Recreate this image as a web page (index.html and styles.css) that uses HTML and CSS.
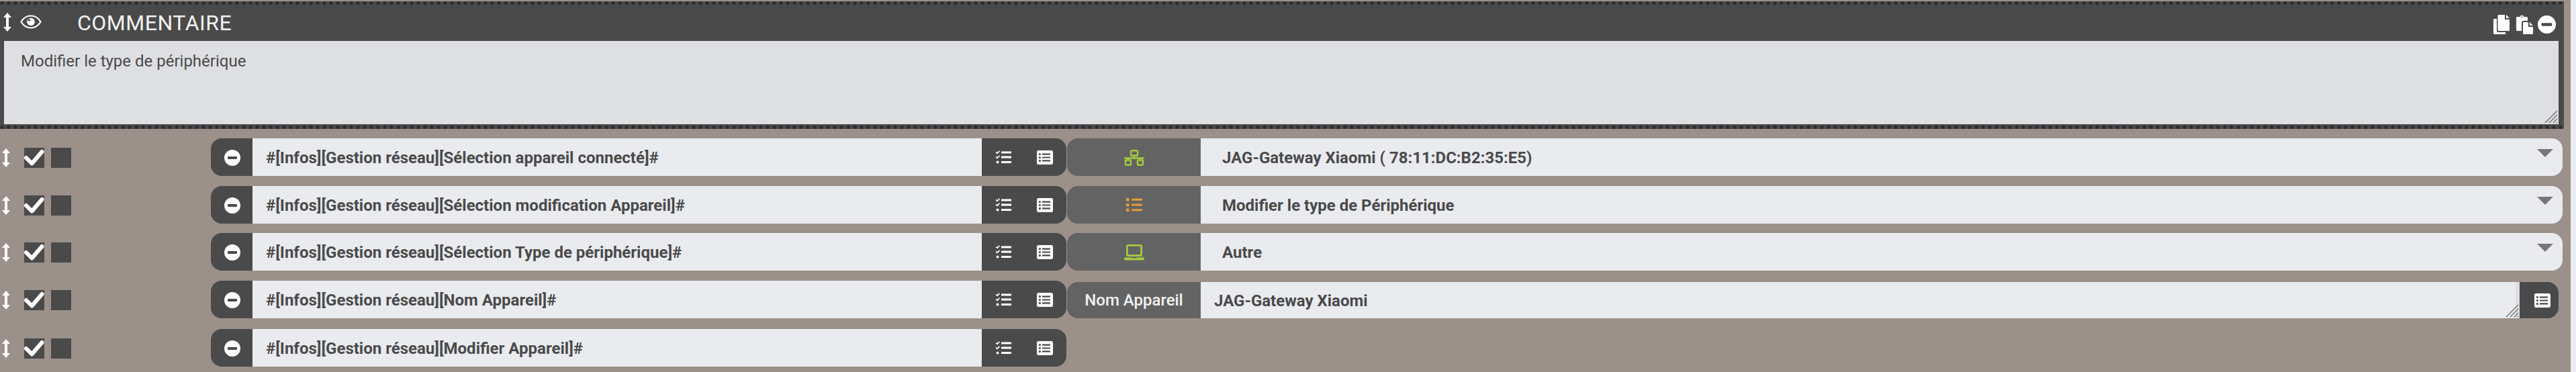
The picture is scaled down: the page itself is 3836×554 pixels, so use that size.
FILE: index.html
```html
<!DOCTYPE html>
<html lang="fr">
<head>
  <meta charset="UTF-8" />
  <title>Scénario</title>
  <link rel="stylesheet" href="styles.css">
</head>
<body>
  <svg class="defs" width="0" height="0">
    <symbol id="i-move" viewBox="0 0 12 28"><path d="M6 0l6 7H8v14h4l-6 7-6-7h4V7H0z" fill="#fff"/></symbol>
    <symbol id="i-eye" viewBox="0 0 32 21"><path d="M1.5 10.5C5 4.500 10 1.500 16 1.500s11 3 14.500 9C27 16.500 22 19.500 16 19.500s-11-3-14.500-9z" fill="none" stroke="#fff" stroke-width="2.200"/><circle cx="16" cy="10.500" r="5.800" fill="#fff"/><circle cx="13.500" cy="8" r="1.800" fill="#4a4a4a"/></symbol>
    <symbol id="i-minus" viewBox="0 0 24 24"><path fill-rule="evenodd" d="M12 0a12 12 0 1 1 0 24a12 12 0 0 1 0-24zM6 10a1 1 0 0 0-1 1v2a1 1 0 0 0 1 1h12a1 1 0 0 0 1-1v-2a1 1 0 0 0-1-1z" fill="#fff"/></symbol>
    <symbol id="i-tasks" viewBox="0 0 24 20"><path d="M.5 3l1.200-1.200 1.300 1.300L5.800.2 7 1.400 3 5.400zM.5 10l1.200-1.200 1.300 1.300 2.800-2.900L7 8.400l-4 4zM9 1.500h15v3H9zM9 8.500h15v3H9zM9 16h15v3H9z" fill="#fff"/><circle cx="3.500" cy="17.500" r="2" fill="#fff"/></symbol>
    <symbol id="i-list" viewBox="0 0 24 21"><path fill-rule="evenodd" d="M2.500 0h19A2.500 2.500 0 0 1 24 2.500v16a2.500 2.500 0 0 1-2.500 2.500h-19A2.500 2.500 0 0 1 0 18.500v-16A2.500 2.500 0 0 1 2.500 0zM8 4.500v2.200h12V4.500zM8 9.400v2.200h12V9.400zM8 14.300v2.200h12v-2.200zM6 5.600a1.600 1.600 0 1 0-3.200 0a1.600 1.600 0 0 0 3.200 0zM6 10.500a1.600 1.600 0 1 0-3.200 0a1.600 1.600 0 0 0 3.200 0zM6 15.400a1.600 1.600 0 1 0-3.200 0a1.600 1.600 0 0 0 3.200 0z" fill="#fff"/></symbol>
    <symbol id="i-copy" viewBox="0 0 25 29"><path d="M8 0h9v7h7v15.500a1.500 1.500 0 0 1-1.500 1.500H8a1.500 1.500 0 0 1-1.500-1.500v-21A1.500 1.500 0 0 1 8 0zM19 0l5 5h-5zM0 7.500A1.500 1.500 0 0 1 1.500 6H5v18a2 2 0 0 0 2 2h11v1.500a1.500 1.500 0 0 1-1.500 1.500h-15A1.500 1.500 0 0 1 0 27.500z" fill="#fff"/></symbol>
    <symbol id="i-paste" viewBox="0 0 25 28"><path fill-rule="evenodd" d="M1.500 2H6a2.500 2.500 0 0 1 5 0h4.500A1.500 1.500 0 0 1 17 3.500V8h-6a3 3 0 0 0-3 3v12H1.500A1.500 1.500 0 0 1 0 21.500v-18A1.500 1.500 0 0 1 1.500 2zM8.500 1.500a1 1 0 1 0 0 2a1 1 0 0 0 0-2z" fill="#fff"/><path d="M11 10h7v7h7v9.500a1.500 1.500 0 0 1-1.500 1.500h-12A1.500 1.500 0 0 1 10 26.500v-15.500a1 1 0 0 1 1-1zM20 10l5 5h-5z" fill="#fff"/></symbol>
    <symbol id="i-check" viewBox="0 0 30 26"><path d="M3 13l8.500 8.500L26.500 4" fill="none" stroke="#fff" stroke-width="6" stroke-linecap="round" stroke-linejoin="round"/></symbol>
    <symbol id="i-network" viewBox="0 0 30 24"><g fill="none" stroke="#a4cb3f" stroke-width="2.400"><rect x="10" y="1.200" width="10" height="7.500" rx="1"/><rect x="2" y="15.500" width="8" height="7.300" rx="1"/><rect x="20" y="15.500" width="8" height="7.300" rx="1"/><path d="M15 9v3.500M0 12.500h30M6 12.500v3M24 12.500v3"/></g></symbol>
    <symbol id="i-bullets" viewBox="0 0 24 20"><g fill="#e39f38"><rect x="0" y="0" width="4.500" height="4.500" rx="1"/><rect x="0" y="8" width="4.500" height="4.500" rx="1"/><rect x="0" y="15.500" width="4.500" height="4.500" rx="1"/><rect x="8" y=".7" width="16" height="3" rx=".8"/><rect x="8" y="8.500" width="16" height="3" rx=".8"/><rect x="8" y="16.300" width="16" height="3" rx=".8"/></g></symbol>
    <symbol id="i-laptop" viewBox="0 0 30 24"><rect x="4.400" y="1.400" width="21.200" height="15.200" rx="1.500" fill="none" stroke="#a4cb3f" stroke-width="2.800"/><path d="M0 19.500h11.500l1 1h5l1-1H30v2a2 2 0 0 1-2 2H2a2 2 0 0 1-2-2z" fill="#a4cb3f"/></symbol>
    <symbol id="i-grip" viewBox="0 0 20 20"><path d="M1 19L19 1M7 19L19 7M13 19l6-6M18 19l1-1" fill="none" stroke="#6f6f6f" stroke-width="1.400"/></symbol>
  </svg>

  <main class="page">
    <section class="comment">
      <header class="comment-head">
        <svg class="ic-move"><use href="#i-move"/></svg>
        <svg class="ic-eye"><use href="#i-eye"/></svg>
        <span class="comment-title">COMMENTAIRE</span>
        <span class="comment-tools">
          <svg class="ic-copy"><use href="#i-copy"/></svg>
          <svg class="ic-paste"><use href="#i-paste"/></svg>
          <svg class="ic-minus-lg"><use href="#i-minus"/></svg>
        </span>
      </header>
      <div class="comment-text">
        Modifier le type de périphérique
        <svg class="grip"><use href="#i-grip"/></svg>
      </div>
    </section>

    <div class="rows">
      <div class="row">
        <div class="row-tools">
          <svg class="ic-drag"><use href="#i-move"/></svg>
          <span class="box"><svg class="ic-check"><use href="#i-check"/></svg></span>
          <span class="box"></span>
        </div>
        <div class="cmd">
          <span class="cmd-del"><svg class="ic-minus"><use href="#i-minus"/></svg></span>
          <span class="cmd-name">#[Infos][Gestion réseau][Sélection appareil connecté]#</span>
          <span class="cmd-btns"><svg class="ic-tasks"><use href="#i-tasks"/></svg><svg class="ic-list"><use href="#i-list"/></svg></span>
        </div>
        <div class="param">
          <span class="param-label"><svg class="ic-network"><use href="#i-network"/></svg></span>
          <span class="param-select">JAG-Gateway Xiaomi ( 78:11:DC:B2:35:E5)<i class="arrow"></i></span>
        </div>
      </div>

      <div class="row">
        <div class="row-tools">
          <svg class="ic-drag"><use href="#i-move"/></svg>
          <span class="box"><svg class="ic-check"><use href="#i-check"/></svg></span>
          <span class="box"></span>
        </div>
        <div class="cmd">
          <span class="cmd-del"><svg class="ic-minus"><use href="#i-minus"/></svg></span>
          <span class="cmd-name">#[Infos][Gestion réseau][Sélection modification Appareil]#</span>
          <span class="cmd-btns"><svg class="ic-tasks"><use href="#i-tasks"/></svg><svg class="ic-list"><use href="#i-list"/></svg></span>
        </div>
        <div class="param">
          <span class="param-label"><svg class="ic-bullets"><use href="#i-bullets"/></svg></span>
          <span class="param-select">Modifier le type de Périphérique<i class="arrow"></i></span>
        </div>
      </div>

      <div class="row">
        <div class="row-tools">
          <svg class="ic-drag"><use href="#i-move"/></svg>
          <span class="box"><svg class="ic-check"><use href="#i-check"/></svg></span>
          <span class="box"></span>
        </div>
        <div class="cmd">
          <span class="cmd-del"><svg class="ic-minus"><use href="#i-minus"/></svg></span>
          <span class="cmd-name">#[Infos][Gestion réseau][Sélection Type de périphérique]#</span>
          <span class="cmd-btns"><svg class="ic-tasks"><use href="#i-tasks"/></svg><svg class="ic-list"><use href="#i-list"/></svg></span>
        </div>
        <div class="param">
          <span class="param-label"><svg class="ic-laptop"><use href="#i-laptop"/></svg></span>
          <span class="param-select">Autre<i class="arrow"></i></span>
        </div>
      </div>

      <div class="row">
        <div class="row-tools">
          <svg class="ic-drag"><use href="#i-move"/></svg>
          <span class="box"><svg class="ic-check"><use href="#i-check"/></svg></span>
          <span class="box"></span>
        </div>
        <div class="cmd">
          <span class="cmd-del"><svg class="ic-minus"><use href="#i-minus"/></svg></span>
          <span class="cmd-name">#[Infos][Gestion réseau][Nom Appareil]#</span>
          <span class="cmd-btns"><svg class="ic-tasks"><use href="#i-tasks"/></svg><svg class="ic-list"><use href="#i-list"/></svg></span>
        </div>
        <div class="param param-input">
          <span class="param-label">Nom Appareil</span>
          <span class="param-text">JAG-Gateway Xiaomi<svg class="grip"><use href="#i-grip"/></svg></span>
          <span class="param-btn"><svg class="ic-list"><use href="#i-list"/></svg></span>
        </div>
      </div>

      <div class="row">
        <div class="row-tools">
          <svg class="ic-drag"><use href="#i-move"/></svg>
          <span class="box"><svg class="ic-check"><use href="#i-check"/></svg></span>
          <span class="box"></span>
        </div>
        <div class="cmd">
          <span class="cmd-del"><svg class="ic-minus"><use href="#i-minus"/></svg></span>
          <span class="cmd-name">#[Infos][Gestion réseau][Modifier Appareil]#</span>
          <span class="cmd-btns"><svg class="ic-tasks"><use href="#i-tasks"/></svg><svg class="ic-list"><use href="#i-list"/></svg></span>
        </div>
      </div>
    </div>
  </main>
</body>
</html>
```

FILE: styles.css
```css
html, body { margin: 0; height: 100%; overflow: hidden; }
body { background: #e9ebef; font-family: Roboto, sans-serif; color: #4a4a4a; }
svg { display: block; flex: none; }
.defs { position: absolute; }
.page { width: 3828px; height: 554px; padding-top: 2px; box-sizing: border-box; background: #9b918a; }

/* comment block */
.comment {
  width: 3818px; height: 190px; box-sizing: border-box; padding: 5px 8px 7px 6px;
  display: flex; flex-direction: column;
  background-color: #4a4a4a;
  background-image: radial-gradient(circle at 3px 2.5px, #2c2c2c 2.3px, transparent 2.9px), radial-gradient(circle at 3px 2.5px, #2c2c2c 2.3px, transparent 2.9px);
  background-size: 10px 5px;
  background-repeat: repeat-x;
  background-position: 0 0, 0 184.500px;
}
.comment-head { height: 54px; display: flex; align-items: center; color: #f2f2f2; margin-left: -6px; margin-right: -8px; }
.ic-move { width: 12px; height: 28px; margin: -3px 0 0 5px; }
.ic-eye { width: 32px; height: 21px; margin: -3px 0 0 13px; }
.comment-title { font-size: 32px; line-height: 54px; margin-left: 53px; letter-spacing: .5px; }
.comment-tools { margin: 4px 12px 0 auto; display: flex; align-items: center; }
.ic-copy { width: 25px; height: 29px; }
.ic-paste { width: 25px; height: 28px; margin-left: 9px; margin-top: 2px; }
.ic-minus-lg { width: 27px; height: 27px; margin-left: 7px; }
.comment-text { height: 124px; flex: none; box-sizing: border-box; position: relative; background: #dedfe3; padding: 16px 25px; font-size: 24px; line-height: 28px; }
.grip { position: absolute; right: 1px; bottom: 1px; width: 20px; height: 20px; }

/* command rows */
.rows { padding-top: 14px; }
.row { display: flex; height: 56px; margin-bottom: 15px; }
.row:nth-child(2) { margin-bottom: 14px; }
.row:nth-child(4) { margin-bottom: 16px; }
.row-tools { width: 314px; flex: none; display: flex; align-items: center; }
.ic-drag { width: 12px; height: 28px; margin-left: 3px; margin-top: 1px; }
.box { width: 30px; height: 30px; background: #4a4a4a; margin-left: 10px; margin-top: 2px; display: flex; align-items: center; justify-content: center; }
.ic-drag + .box { margin-left: 21px; }
.ic-check { width: 30px; height: 26px; }

.cmd { width: 1274px; flex: none; display: flex; }
.cmd-del { width: 62px; background: #4a4a4a; border-radius: 16px 0 0 16px; display: flex; align-items: center; justify-content: center; }
.ic-minus { width: 24px; height: 24px; margin-top: 1px; margin-left: 2px; }
.cmd-name { flex: 1; background: #e9ebef; padding-left: 20px; font-size: 24px; font-weight: 700; line-height: 58px; }
.cmd-btns { width: 126px; background: #4a4a4a; border-radius: 0 16px 16px 0; display: flex; align-items: center; box-sizing: border-box; padding-left: 20px; gap: 38px; }
.ic-tasks { width: 24px; height: 20px; }
.ic-list { width: 24px; height: 21px; }

.param { margin-left: 1px; width: 2227px; flex: none; display: flex; }
.param-label { width: 199px; background: #636363; border-radius: 16px 0 0 16px; display: flex; align-items: center; justify-content: center; color: #f2f2f2; font-size: 24px; font-weight: 500; }
.ic-network { width: 30px; height: 24px; margin-top: 2px; }
.ic-bullets { width: 24px; height: 20px; }
.ic-laptop { width: 30px; height: 24px; margin-top: 2px; }
.param-select { flex: 1; position: relative; background: #e9ebef; border-radius: 0 16px 16px 0; padding-left: 32px; font-size: 24px; font-weight: 700; line-height: 58px; }
.arrow { position: absolute; right: 14px; top: 16px; border-style: solid; border-width: 12px 12px 0; border-color: #777 transparent transparent; }

.param-input { margin-top: 2px; }
.param-text { width: 1964px; box-sizing: border-box; position: relative; background: #e9ebef; border-right: 6px solid #dedfe3; padding-left: 20px; font-size: 24px; font-weight: 700; line-height: 56px; }
.param-text .grip { right: -5px; }
.param-btn { width: 58px; background: #4a4a4a; border-radius: 0 16px 16px 0; display: flex; align-items: center; justify-content: center; }
.param-btn .ic-list { margin-left: 10px; }
```
